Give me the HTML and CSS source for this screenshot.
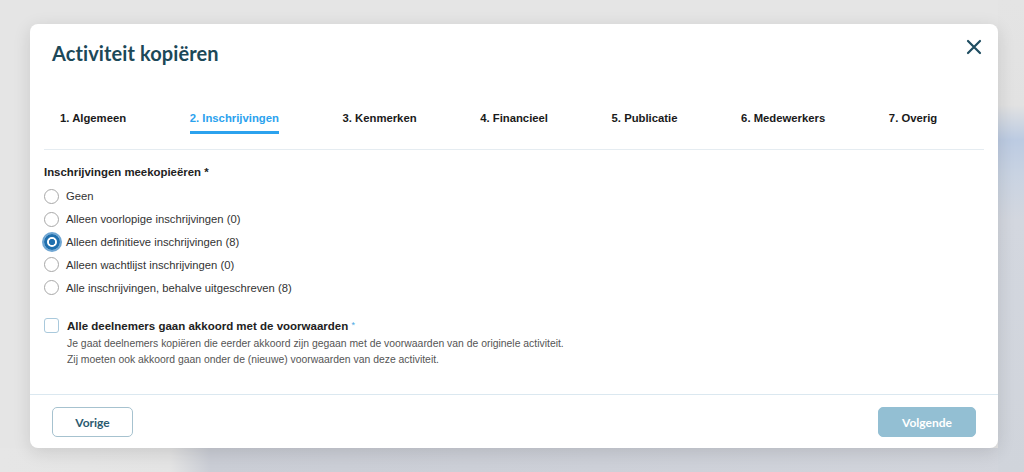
FILE: index.html
```html
<!DOCTYPE html>
<html lang="nl">
<head>
<meta charset="utf-8">
<title>Activiteit kopiëren</title>
<link rel="stylesheet" href="styles.css">
</head>
<body>
<div class="modal">
  <header class="modal-header">
    <h1 class="modal-title">Activiteit kopiëren</h1>
    <button class="close-btn" aria-label="Sluiten">
      <svg width="16" height="16" viewBox="0 0 16 16"><path d="M2 2 L14 14 M14 2 L2 14" stroke="#1f4d61" stroke-width="2.2" stroke-linecap="round" fill="none"/></svg>
    </button>
  </header>
  <nav class="tabs">
    <span class="tab">1. Algemeen</span>
    <span class="tab active">2. Inschrijvingen</span>
    <span class="tab">3. Kenmerken</span>
    <span class="tab">4. Financieel</span>
    <span class="tab">5. Publicatie</span>
    <span class="tab">6. Medewerkers</span>
    <span class="tab">7. Overig</span>
  </nav>
  <section class="modal-body">
    <div class="field-label">Inschrijvingen meekopieëren *</div>
    <div class="radio-list">
      <label class="radio-row"><span class="radio"></span>Geen</label>
      <label class="radio-row"><span class="radio"></span>Alleen voorlopige inschrijvingen (0)</label>
      <label class="radio-row"><span class="radio checked"></span>Alleen definitieve inschrijvingen (8)</label>
      <label class="radio-row"><span class="radio"></span>Alleen wachtlijst inschrijvingen (0)</label>
      <label class="radio-row"><span class="radio"></span>Alle inschrijvingen, behalve uitgeschreven (8)</label>
    </div>
    <div class="check-row">
      <span class="checkbox"></span>
      <div class="check-text">
        <div class="check-label">Alle deelnemers gaan akkoord met de voorwaarden <span class="req">*</span></div>
        <p class="check-desc">Je gaat deelnemers kopiëren die eerder akkoord zijn gegaan met de voorwaarden van de originele activiteit.<br>Zij moeten ook akkoord gaan onder de (nieuwe) voorwaarden van deze activiteit.</p>
      </div>
    </div>
  </section>
  <footer class="modal-footer">
    <button class="btn btn-outline">Vorige</button>
    <button class="btn btn-primary">Volgende</button>
  </footer>
</div>
</body>
</html>
```
FILE: styles.css
```css
* { box-sizing: border-box; }
html, body { margin: 0; height: 100%; }
body {
  width: 1024px;
  height: 472px;
  overflow: hidden;
  background-color: #e5e5e5;
  background-image:
    linear-gradient(180deg, #e4e4e4 0, #e2e2e2 105px, #bccbe2 140px, #c9d3e2 175px, #d3d7df 220px, #d0d4db 100%),
    linear-gradient(90deg, #e6e6e6 0, #e4e4e4 170px, #cacdd5 210px, #cdd0d8 600px, #d2d5dc 100%);
  background-size: 26px 100%, 100% 24px;
  background-position: right top, left bottom;
  background-repeat: no-repeat;
  padding: 24px 26px 0 30px;
  font-family: "Liberation Sans", Arial, sans-serif;
  color: #222;
}
.modal {
  width: 968px;
  height: 424px;
  background: #fff;
  border-radius: 8px;
  box-shadow: 0 4px 18px rgba(0,0,0,0.12);
  display: flex;
  flex-direction: column;
  position: relative;
}
.modal-header {
  padding: 17px 22px 0 22px;
}
.modal-title {
  margin: 0;
  font-family: Lato, "Open Sans", sans-serif;
  font-weight: 700;
  font-size: 20px;
  line-height: 24px;
  color: #1c4858;
  letter-spacing: 0.1px;
}
.close-btn {
  position: absolute;
  top: 13px;
  right: 14px;
  width: 20px;
  height: 20px;
  padding: 2px;
  border: 0;
  background: none;
  display: flex;
  align-items: center;
  justify-content: center;
}
.tabs {
  margin: 46px 14px 0 14px;
  padding: 0 0 15px 16px;
  border-bottom: 1.5px solid #e5ecf1;
  display: flex;
  gap: 63.6px;
}
.tab {
  font-size: 11.3px;
  font-weight: 700;
  line-height: 14px;
  color: #1a1a1a;
  padding-bottom: 6px;
  border-bottom: 3px solid transparent;
  white-space: nowrap;
}
.tab.active {
  color: #2ba2ee;
  border-bottom-color: #2ba2ee;
}
.modal-body {
  padding: 15px 14px 0 14px;
}
.field-label {
  font-size: 11.4px;
  font-weight: 700;
  line-height: 14px;
  color: #222;
}
.radio-list {
  margin-top: 6px;
  display: flex;
  flex-direction: column;
}
.radio-row {
  display: flex;
  align-items: center;
  gap: 7px;
  height: 22.8px;
  font-size: 11.25px;
  color: #333;
}
.radio {
  width: 15px;
  height: 15px;
  border-radius: 50%;
  border: 1px solid #a8a8a8;
  background: #fff;
  flex: none;
}
.radio.checked {
  width: 16px;
  height: 16px;
  margin-left: -0.5px;
  margin-right: -0.5px;
  border: 3px solid #1f6fae;
  background: radial-gradient(circle, #1f6fae 0, #1f6fae 2.8px, #fff 3.4px);
  box-shadow: 0 0 0 2px #6fa6d3;
}
.check-row {
  margin-top: 19px;
  display: flex;
  gap: 8px;
  align-items: flex-start;
}
.checkbox {
  width: 15px;
  height: 15px;
  border: 1.5px solid #a9c9dc;
  border-radius: 3px;
  flex: none;
  margin-top: 0;
}
.check-label {
  font-size: 11.5px;
  font-weight: 700;
  line-height: 15px;
  color: #222;
}
.req {
  color: #4aa7e3;
  font-size: 9px;
  font-weight: 400;
  vertical-align: 2px;
}
.check-desc {
  margin: 2px 0 0 0;
  font-size: 10.4px;
  line-height: 16px;
  color: #555;
}
.modal-footer {
  margin-top: auto;
  border-top: 1.5px solid #dbe8f0;
  padding: 12px 22px 11px 22px;
  display: flex;
  justify-content: space-between;
}
.btn {
  height: 30px;
  border-radius: 5px;
  font-family: Lato, "Open Sans", sans-serif;
  font-weight: 700;
  font-size: 12px;
  cursor: pointer;
}
.btn-outline {
  width: 81px;
  background: #fff;
  border: 1px solid #a6c2cf;
  color: #2c5b70;
}
.btn-primary {
  width: 98px;
  background: #93bfd3;
  border: 1px solid #93bfd3;
  color: #fff;
}
```
